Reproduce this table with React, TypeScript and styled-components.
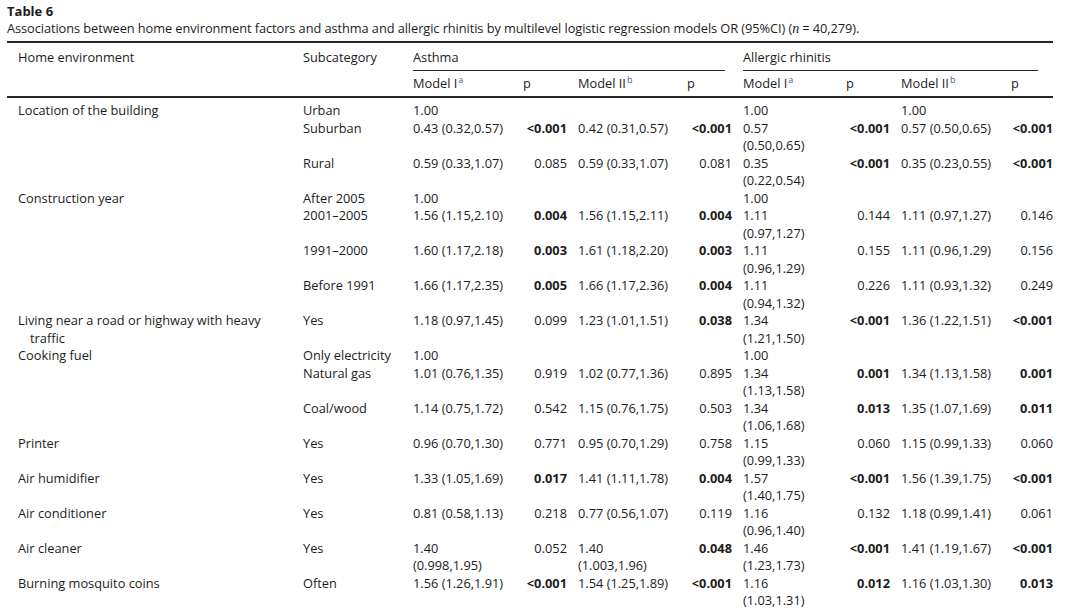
import React from "react";
import styled, { createGlobalStyle } from "styled-components";

const GlobalStyle = createGlobalStyle`
  html, body { margin: 0; padding: 0; background: #ffffff; }
  body {
    font-family: "Open Sans", "Liberation Sans", sans-serif;
    color: #1c1c1c;
  }
`;

const Page = styled.div`
  width: 1080px;
  height: 611px;
  overflow: hidden;
  padding: 3px 27px 0 7px;
  box-sizing: border-box;
  font-size: 12.8px;
`;

const Title = styled.div`
  font-weight: 700;
  font-size: 13px;
  line-height: 17px;
`;

const Caption = styled.div`
  line-height: 17px;
  margin-bottom: 4px;
  white-space: nowrap;
  letter-spacing: -0.07px;
`;

const Table = styled.table`
  width: 1046px;
  table-layout: fixed;
  border-collapse: collapse;
  border-top: 2px solid #262626;
`;

const HeadCell = styled.th<{ $ruled?: boolean }>`
  font-weight: 400;
  text-align: left;
  vertical-align: top;
  padding: 6px 0 0 11px;
  line-height: 17px;
  white-space: nowrap;
  border-bottom: ${(p) => (p.$ruled ? "2px solid #262626" : "none")};
`;

const SubHeadCell = styled.th`
  font-weight: 400;
  text-align: left;
  vertical-align: top;
  padding: 4px 0 4px 11px;
  line-height: 17px;
  white-space: nowrap;
  border-bottom: 2px solid #262626;
`;

const SpanLabel = styled.div<{ $inset: number }>`
  border-bottom: 1px solid #262626;
  padding-bottom: 4px;
  margin-right: ${(p) => p.$inset}px;
`;

const Sup = styled.sup`
  font-size: 9px;
  line-height: 0;
  color: #4459a6;
  vertical-align: 5px;
  margin-left: 1px;
`;

const Body = styled.tbody`
  tr:first-child td { padding-top: 4px; }
`;

const FactorCell = styled.td`
  vertical-align: top;
  padding: 0 0 0 23px;
  text-indent: -12px;
  line-height: 17.5px;
  white-space: pre-line;
`;

const Cell = styled.td<{ $bold?: boolean; $right?: boolean }>`
  vertical-align: top;
  padding: 0 0 0 11px;
  line-height: 17.5px;
  white-space: pre-line;
  text-align: ${(p) => (p.$right ? "right" : "left")};
  font-weight: ${(p) => (p.$bold ? 700 : 400)};
`;

const Italic = styled.i`
  font-family: "Liberation Serif", serif;
  font-size: 14px;
`;

type Sub = { sub: string; v: string[] };
type Group = { factor: string; subs: Sub[] };

const data: Group[] = [
  {
    factor: "Location of the building",
    subs: [
      { sub: "Urban", v: ["1.00", "", "", "", "1.00", "", "1.00", ""] },
      {
        sub: "Suburban",
        v: ["0.43 (0.32,0.57)", "<0.001", "0.42 (0.31,0.57)", "<0.001", "0.57\n(0.50,0.65)", "<0.001", "0.57 (0.50,0.65)", "<0.001"],
      },
      {
        sub: "Rural",
        v: ["0.59 (0.33,1.07)", "0.085", "0.59 (0.33,1.07)", "0.081", "0.35\n(0.22,0.54)", "<0.001", "0.35 (0.23,0.55)", "<0.001"],
      },
    ],
  },
  {
    factor: "Construction year",
    subs: [
      { sub: "After 2005", v: ["1.00", "", "", "", "1.00", "", "", ""] },
      {
        sub: "2001–2005",
        v: ["1.56 (1.15,2.10)", "0.004", "1.56 (1.15,2.11)", "0.004", "1.11\n(0.97,1.27)", "0.144", "1.11 (0.97,1.27)", "0.146"],
      },
      {
        sub: "1991–2000",
        v: ["1.60 (1.17,2.18)", "0.003", "1.61 (1.18,2.20)", "0.003", "1.11\n(0.96,1.29)", "0.155", "1.11 (0.96,1.29)", "0.156"],
      },
      {
        sub: "Before 1991",
        v: ["1.66 (1.17,2.35)", "0.005", "1.66 (1.17,2.36)", "0.004", "1.11\n(0.94,1.32)", "0.226", "1.11 (0.93,1.32)", "0.249"],
      },
    ],
  },
  {
    factor: "Living near a road or highway with heavy\ntraffic",
    subs: [
      {
        sub: "Yes",
        v: ["1.18 (0.97,1.45)", "0.099", "1.23 (1.01,1.51)", "0.038", "1.34\n(1.21,1.50)", "<0.001", "1.36 (1.22,1.51)", "<0.001"],
      },
    ],
  },
  {
    factor: "Cooking fuel",
    subs: [
      { sub: "Only electricity", v: ["1.00", "", "", "", "1.00", "", "", ""] },
      {
        sub: "Natural gas",
        v: ["1.01 (0.76,1.35)", "0.919", "1.02 (0.77,1.36)", "0.895", "1.34\n(1.13,1.58)", "0.001", "1.34 (1.13,1.58)", "0.001"],
      },
      {
        sub: "Coal/wood",
        v: ["1.14 (0.75,1.72)", "0.542", "1.15 (0.76,1.75)", "0.503", "1.34\n(1.06,1.68)", "0.013", "1.35 (1.07,1.69)", "0.011"],
      },
    ],
  },
  {
    factor: "Printer",
    subs: [
      {
        sub: "Yes",
        v: ["0.96 (0.70,1.30)", "0.771", "0.95 (0.70,1.29)", "0.758", "1.15\n(0.99,1.33)", "0.060", "1.15 (0.99,1.33)", "0.060"],
      },
    ],
  },
  {
    factor: "Air humidifier",
    subs: [
      {
        sub: "Yes",
        v: ["1.33 (1.05,1.69)", "0.017", "1.41 (1.11,1.78)", "0.004", "1.57\n(1.40,1.75)", "<0.001", "1.56 (1.39,1.75)", "<0.001"],
      },
    ],
  },
  {
    factor: "Air conditioner",
    subs: [
      {
        sub: "Yes",
        v: ["0.81 (0.58,1.13)", "0.218", "0.77 (0.56,1.07)", "0.119", "1.16\n(0.96,1.40)", "0.132", "1.18 (0.99,1.41)", "0.061"],
      },
    ],
  },
  {
    factor: "Air cleaner",
    subs: [
      {
        sub: "Yes",
        v: ["1.40\n(0.998,1.95)", "0.052", "1.40\n(1.003,1.96)", "0.048", "1.46\n(1.23,1.73)", "<0.001", "1.41 (1.19,1.67)", "<0.001"],
      },
    ],
  },
  {
    factor: "Burning mosquito coins",
    subs: [
      {
        sub: "Often",
        v: ["1.56 (1.26,1.91)", "<0.001", "1.54 (1.25,1.89)", "<0.001", "1.16\n(1.03,1.31)", "0.012", "1.16 (1.03,1.30)", "0.013"],
      },
    ],
  },
];

const widths = [285, 110, 110, 55, 109, 56, 103, 55, 110, 53];

const isSignificant = (p: string) => p.startsWith("<") || (p !== "" && parseFloat(p) < 0.05);

export default function App() {
  return (
    <>
      <GlobalStyle />
      <Page>
        <Title>Table 6</Title>
        <Caption>
          Associations between home environment factors and asthma and allergic rhinitis by multilevel logistic
          regression models OR (95%CI) (<Italic>n</Italic> = 40,279).
        </Caption>
        <Table>
          <colgroup>
            {widths.map((w, i) => (
              <col key={i} style={{ width: w }} />
            ))}
          </colgroup>
          <thead>
            <tr>
              <HeadCell rowSpan={2} $ruled>
                Home environment
              </HeadCell>
              <HeadCell rowSpan={2} $ruled>
                Subcategory
              </HeadCell>
              <HeadCell colSpan={4}>
                <SpanLabel $inset={7}>Asthma</SpanLabel>
              </HeadCell>
              <HeadCell colSpan={4}>
                <SpanLabel $inset={15}>Allergic rhinitis</SpanLabel>
              </HeadCell>
            </tr>
            <tr>
              <SubHeadCell>
                Model I<Sup>a</Sup>
              </SubHeadCell>
              <SubHeadCell>p</SubHeadCell>
              <SubHeadCell>
                Model II<Sup>b</Sup>
              </SubHeadCell>
              <SubHeadCell>p</SubHeadCell>
              <SubHeadCell>
                Model I<Sup>a</Sup>
              </SubHeadCell>
              <SubHeadCell>p</SubHeadCell>
              <SubHeadCell>
                Model II<Sup>b</Sup>
              </SubHeadCell>
              <SubHeadCell>p</SubHeadCell>
            </tr>
          </thead>
          <Body>
            {data.map((g) =>
              g.subs.map((s, si) => (
                <tr key={g.factor + s.sub}>
                  {si === 0 && <FactorCell rowSpan={g.subs.length}>{g.factor}</FactorCell>}
                  <Cell>{s.sub}</Cell>
                  {s.v.map((val, vi) =>
                    vi % 2 === 1 ? (
                      <Cell key={vi} $right $bold={isSignificant(val)}>
                        {val}
                      </Cell>
                    ) : (
                      <Cell key={vi}>{val}</Cell>
                    )
                  )}
                </tr>
              ))
            )}
          </Body>
        </Table>
      </Page>
    </>
  );
}
